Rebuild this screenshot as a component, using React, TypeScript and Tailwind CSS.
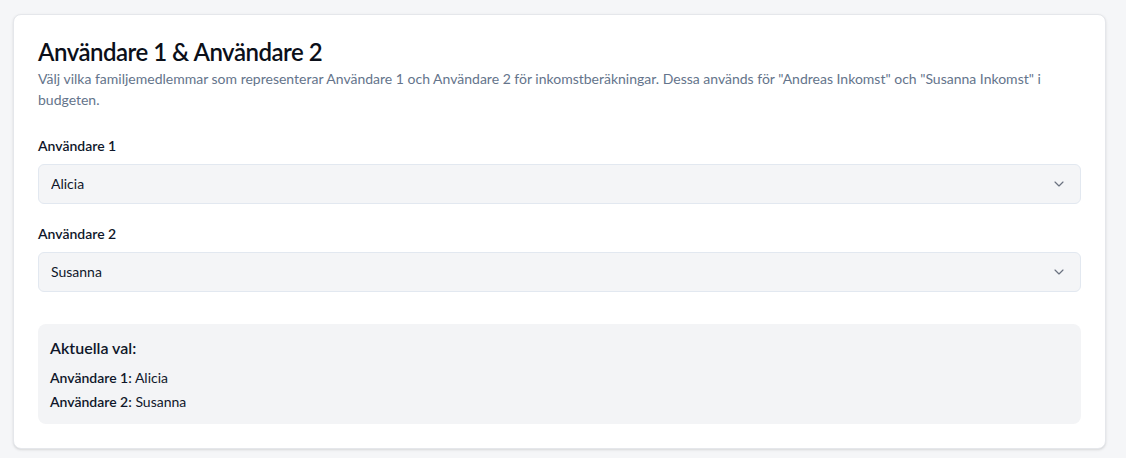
import React, { useState } from 'react';
import { ChevronDown } from 'lucide-react';

const members = ['Alicia', 'Andreas', 'Susanna'];

const UserSelect: React.FC<{ label: string; value: string; onChange: (v: string) => void }> = ({ label, value, onChange }) => (
  <div className="flex flex-col gap-2">
    <label className="text-sm font-semibold text-[#0f172a] leading-5">{label}</label>
    <div className="relative">
      <select
        value={value}
        onChange={(e) => onChange(e.target.value)}
        className="w-full h-10 appearance-none rounded-md border border-[#e2e8f0] bg-[#f4f5f7] px-3 text-sm text-[#0f172a] outline-none"
      >
        {members.map((m) => (
          <option key={m} value={m}>{m}</option>
        ))}
      </select>
      <ChevronDown className="pointer-events-none absolute right-[14px] top-1/2 -translate-y-1/2 h-4 w-4 text-[#6b7280]" strokeWidth={1.75} />
    </div>
  </div>
);

export default function App() {
  const [user1, setUser1] = useState('Alicia');
  const [user2, setUser2] = useState('Susanna');

  return (
    <div className="min-h-screen bg-[#f5f6f8] pt-[14px] pl-[13px] pr-5 pb-[14px] font-['Lato',sans-serif]">
      <div className="rounded-lg border border-[#e5e7eb] bg-white px-6 pt-[23px] pb-6 shadow-sm">
        <h2 className="text-2xl font-semibold leading-7 tracking-[-0.5px] text-[#0b0f19]">Användare 1 &amp; Användare 2</h2>
        <p className="mt-[2px] text-sm leading-[21px] text-[#64748b]">
          Välj vilka familjemedlemmar som representerar Användare 1 och Användare 2 för inkomstberäkningar. Dessa används för "Andreas Inkomst" och "Susanna Inkomst" i budgeten.
        </p>

        <div className="mt-[26px] flex flex-col gap-5">
          <UserSelect label="Användare 1" value={user1} onChange={setUser1} />
          <UserSelect label="Användare 2" value={user2} onChange={setUser2} />
        </div>

        <div className="mt-8 rounded-lg bg-[#f3f4f6] px-3 pt-3 pb-[10px]">
          <h3 className="text-base font-semibold leading-6 text-[#0f172a]">Aktuella val:</h3>
          <div className="mt-[6px] flex flex-col text-sm leading-6 text-[#0f172a]">
            <p><span className="font-semibold">Användare 1:</span> {user1}</p>
            <p><span className="font-semibold">Användare 2:</span> {user2}</p>
          </div>
        </div>
      </div>
    </div>
  );
}
